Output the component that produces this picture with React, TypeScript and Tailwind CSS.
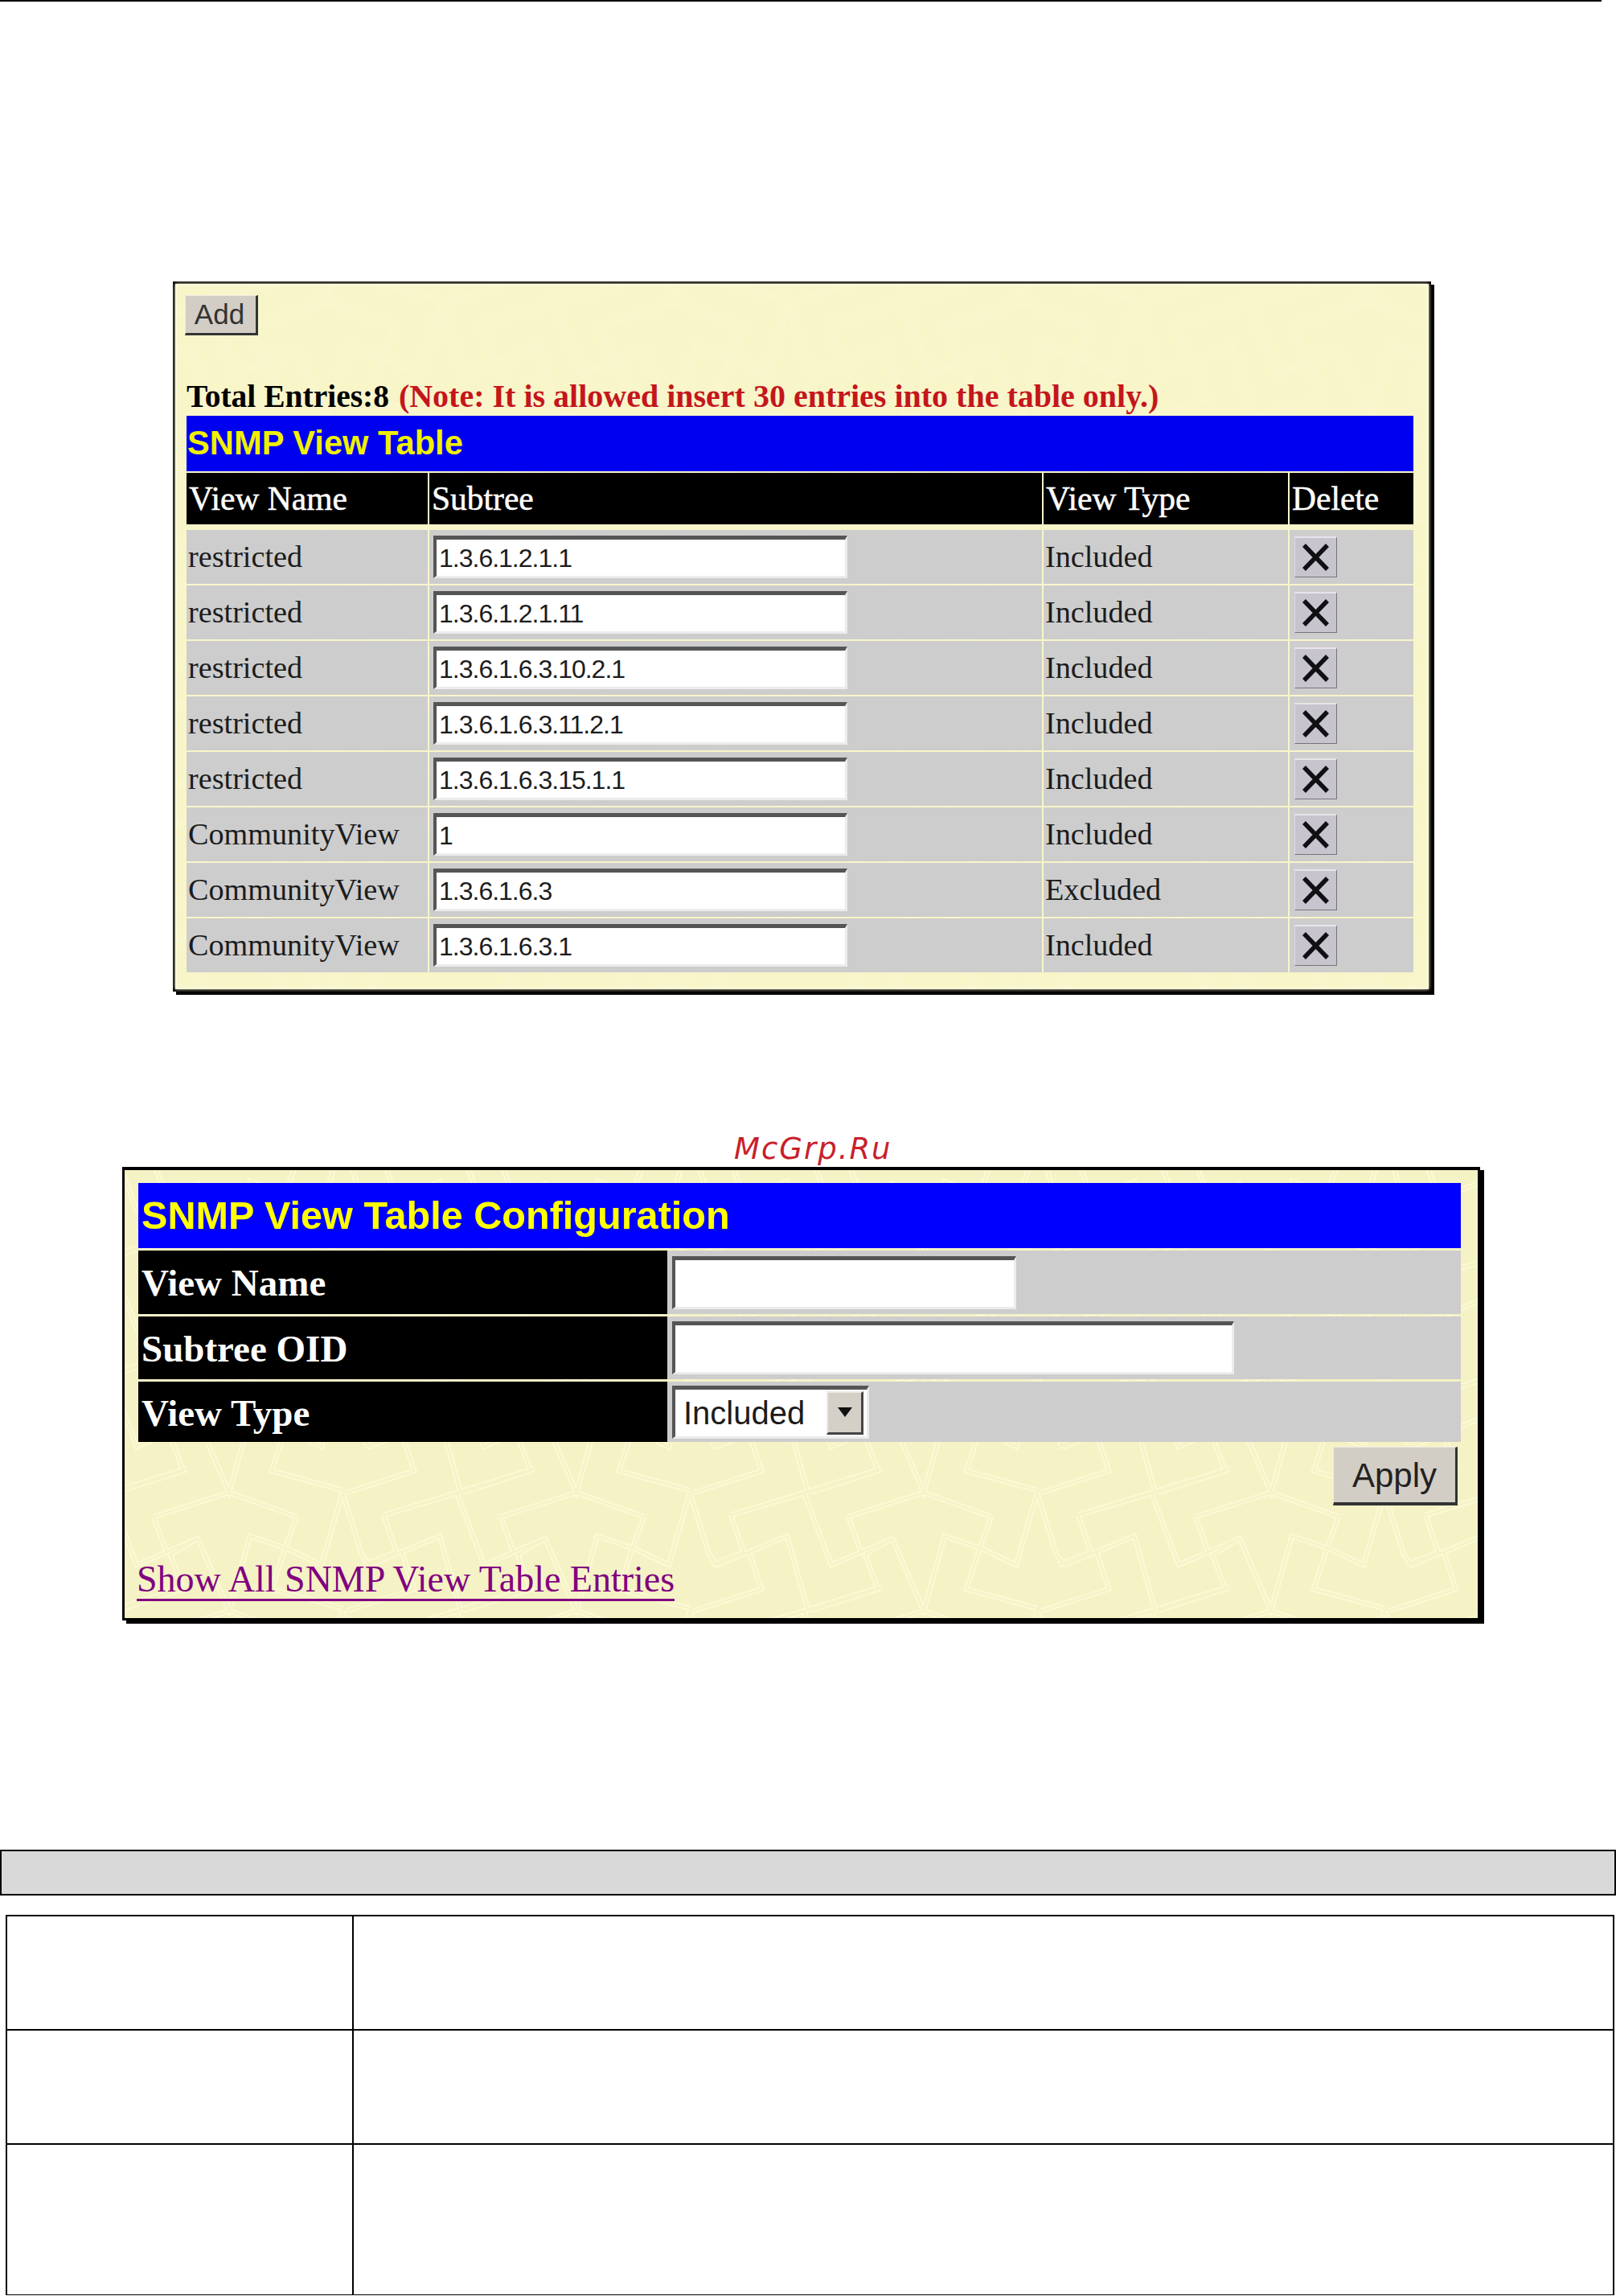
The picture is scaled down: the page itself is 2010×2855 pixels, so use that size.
const serif = "font-['Liberation_Serif',serif]";
const sans = "font-['Liberation_Sans',sans-serif]";

const rows: [string, string, string][] = [
  ["restricted", "1.3.6.1.2.1.1", "Included"],
  ["restricted", "1.3.6.1.2.1.11", "Included"],
  ["restricted", "1.3.6.1.6.3.10.2.1", "Included"],
  ["restricted", "1.3.6.1.6.3.11.2.1", "Included"],
  ["restricted", "1.3.6.1.6.3.15.1.1", "Included"],
  ["CommunityView", "1", "Included"],
  ["CommunityView", "1.3.6.1.6.3", "Excluded"],
  ["CommunityView", "1.3.6.1.6.3.1", "Included"],
];

const tile =
  "M-91 31L0 3L97 -27 M0 3L34 93L110 60L149 150L175 57L222 73L264 93L290 3 M55 33L149 3L233 33 M55 33L71 77 M233 33L217 77L202 123L290 147 M110 60L76 80L92 123L8 150 M290 3L314 80L324 93L411 57L437 150 M411 57L364 77L379 123L295 150 M341 31L436 3 M341 31L357 77L316 93";
const offsets = [-432, 0, 432].flatMap((dx) => [-147, 0, 147].map((dy) => `translate(${dx} ${dy})`));

function Pattern({ id, base, line, x, y, blur }: { id: string; base: string; line: string; x: number; y: number; blur?: boolean }) {
  return (
    <svg className={"absolute inset-0 h-full w-full" + (blur ? " blur-[2px]" : "")} aria-hidden="true">
      <defs>
        <pattern id={id} x={x} y={y} width="432" height="147" patternUnits="userSpaceOnUse">
          <rect width="432" height="147" fill={base} />
          {offsets.map((t) => (
            <path key={t} transform={t} d={tile} fill="none" stroke={line} strokeWidth="7" />
          ))}
          {offsets.map((t) => (
            <path key={t} transform={t} d={tile} fill="none" stroke={base} strokeWidth="2" />
          ))}
        </pattern>
      </defs>
      <rect width="100%" height="100%" fill={`url(#${id})`} />
    </svg>
  );
}

function XButton() {
  return (
    <div className="flex h-[51px] w-[53px] items-center justify-center border-t-2 border-l border-b border-r border-t-[#e8e4ea] border-l-[#ddd9e0] border-b-[#77737c] border-r-[#77737c] bg-[#c8c4cd]">
      <svg width="36" height="36" viewBox="0 0 36 36" aria-hidden="true">
        <path d="M3 3L32 33M32 3L3 33" stroke="#101014" strokeWidth="5.5" fill="none" />
      </svg>
    </div>
  );
}

function TextBox({ value, className }: { value?: string; className: string }) {
  return (
    <div
      className={
        "flex items-center border-t-[5px] border-l-[4px] border-r-[3px] border-b-[3px] border-t-[#555] border-l-[#555] border-r-[#ececec] border-b-[#ececec] bg-white " +
        className
      }
    >
      {value ? <span className={sans + " pl-[3px] text-[32px] leading-none tracking-[-1px] text-[#1c1c1c]"}>{value}</span> : null}
    </div>
  );
}

export default function App() {
  return (
    <div className="h-[2855px] w-[2010px] overflow-hidden bg-white">
      <div className="h-[2px] w-[1992px] bg-black" />

      {/* SNMP View Table */}
      <div className="relative mt-[348px] ml-[215px] h-[883px] w-[1565px] border-[3px] border-black shadow-[4px_4px_0_#000]">
        <Pattern id="p1" base="#f8f5c9" line="#fbf8d0" x={40} y={20} blur />
        <div className="relative pt-[14px] pl-[12px]">
          <button className={sans + " flex h-[50px] w-[91px] items-center justify-center border-t border-l border-r-[3px] border-b-[3px] border-t-[#eeeae2] border-l-[#eeeae2] border-r-[#333] border-b-[#333] bg-[#d2cec6] pr-[3px] text-[35px] text-[#333]"}>
            Add
          </button>
          <div className={serif + " mt-[51px] ml-[2px] h-[49px] text-[39.5px] leading-[49px] font-bold whitespace-nowrap text-black"}>
            Total Entries:8 <span className="ml-[2px] text-[40px] text-[#c4161c]">(Note: It is allowed insert 30 entries into the table only.)</span>
          </div>
          <div className="ml-[2px] w-[1526px]">
            <div className={sans + " flex h-[69px] items-center bg-[#0000f0] pl-[1px] text-[41.7px] font-bold text-[#f0f000]"}>SNMP View Table</div>
            <div className={serif + " mt-[2px] grid h-[64px] grid-cols-[300px_762px_304px_154px] gap-[2px] text-[41.5px] text-white [-webkit-text-stroke:0.5px_#fff]"}>
              <div className="flex items-center bg-black pl-[3px]">View Name</div>
              <div className="flex items-center bg-black pl-[3px]">Subtree</div>
              <div className="flex items-center bg-black pl-[3px]">View Type</div>
              <div className="flex items-center bg-black pl-[3px]">Delete</div>
            </div>
            <div className="mt-[7px] flex flex-col gap-[2px]">
              {rows.map(([name, tree, type], i) => (
                <div key={i} className={serif + " grid h-[67px] grid-cols-[300px_762px_304px_154px] gap-[2px] text-[38.2px] text-[#1c1c1c]"}>
                  <div className="flex items-center bg-[#cdcdcd] pl-[2px]">{name}</div>
                  <div className="flex items-center bg-[#cdcdcd] pl-[5px]">
                    <TextBox value={tree} className="h-[53px] w-[515px]" />
                  </div>
                  <div className="flex items-center bg-[#cdcdcd] pl-[2px]">{type}</div>
                  <div className="flex items-center bg-[#cdcdcd] pl-[6px]">
                    <XButton />
                  </div>
                </div>
              ))}
            </div>
          </div>
        </div>
      </div>

      {/* Watermark */}
      <div className="mt-[173px] ml-[913px] h-[46px] font-['DejaVu_Sans',sans-serif] text-[37px] leading-[46px] tracking-[2px] whitespace-nowrap text-[#c8202a] italic">
        McGrp.Ru
      </div>

      {/* Configuration */}
      <div className="relative mt-[-1px] ml-[152px] h-[564px] w-[1689px] border-[3px] border-t-[4px] border-black shadow-[5px_4px_0_#000]">
        <Pattern id="p2" base="#f5f2c5" line="#fbf8d3" x={413} y={104} />
        <div className="relative pt-[16px] pl-[17px]">
          <div className="w-[1645px]">
            <div className={sans + " flex h-[81px] items-center bg-[#0000ff] pl-[4px] text-[48.6px] font-bold text-[#ffff00]"}>SNMP View Table Configuration</div>
            <div className={serif + " mt-[3px] flex h-[79px] text-[47px] text-white"}>
              <div className="flex w-[658px] items-center bg-black pt-[2px] pl-[4px] font-bold">View Name</div>
              <div className="flex flex-1 items-center bg-[#cdcdcd] pl-[6px]">
                <TextBox className="h-[66px] w-[428px]" />
              </div>
            </div>
            <div className={serif + " mt-[3px] flex h-[78px] text-[47px] text-white"}>
              <div className="flex w-[658px] items-center bg-black pt-[2px] pl-[4px] font-bold">Subtree OID</div>
              <div className="flex flex-1 items-center bg-[#cdcdcd] pl-[6px]">
                <TextBox className="h-[66px] w-[699px]" />
              </div>
            </div>
            <div className={serif + " mt-[3px] flex h-[75px] text-[47px] text-white"}>
              <div className="flex w-[658px] items-center bg-black pt-[4px] pl-[4px] font-bold">View Type</div>
              <div className="flex flex-1 items-center bg-[#cdcdcd] pl-[6px]">
                <div className="flex h-[66px] w-[245px] items-center justify-between border-t-[5px] border-l-[4px] border-r-[3px] border-b-[3px] border-t-[#555] border-l-[#555] border-r-[#ececec] border-b-[#ececec] bg-white">
                  <span className={sans + " pl-[10px] text-[40px] leading-none text-[#1c1c1c]"}>Included</span>
                  <div className="mr-[4px] flex h-[54px] w-[46px] items-center justify-center border-t-2 border-l-2 border-r-[3px] border-b-[3px] border-t-[#eeeae2] border-l-[#eeeae2] border-r-[#444] border-b-[#444] bg-[#d4d0c8]">
                    <svg width="18" height="12" viewBox="0 0 18 12" aria-hidden="true"><path d="M0 0H18L9 12Z" fill="#111" /></svg>
                  </div>
                </div>
              </div>
            </div>
            <div className="mt-[6px] flex justify-end pr-[4px]">
              <button className={sans + " flex h-[73px] w-[155px] items-center justify-center border-t border-l border-r-[3px] border-b-[4px] border-t-[#eeeae2] border-l-[#eeeae2] border-r-[#333] border-b-[#333] bg-[#d2cec6] text-[42px] text-[#222]"}>
                Apply
              </button>
            </div>
          </div>
          <a href="#" className={serif + " mt-[68px] ml-[-2px] inline-block border-b-[3px] border-[#800080] text-[46px] leading-[48px] whitespace-nowrap text-[#800080]"}>
            Show All SNMP View Table Entries
          </a>
        </div>
      </div>

      {/* Section bar */}
      <div className="mt-[285px] h-[57px] w-[2010px] border-2 border-black bg-[#d9d9d9]" />

      {/* Empty description table */}
      <div className="mt-[24px] ml-[7px] w-[2001px] border-2 border-b border-black">
        <div className="flex h-[142px] border-b-[2px] border-black">
          <div className="w-[431px] border-r-2 border-black" />
          <div className="flex-1" />
        </div>
        <div className="flex h-[142px] border-b-[2px] border-black">
          <div className="w-[431px] border-r-2 border-black" />
          <div className="flex-1" />
        </div>
        <div className="flex h-[186px]">
          <div className="w-[431px] border-r-2 border-black" />
          <div className="flex-1" />
        </div>
      </div>
    </div>
  );
}
